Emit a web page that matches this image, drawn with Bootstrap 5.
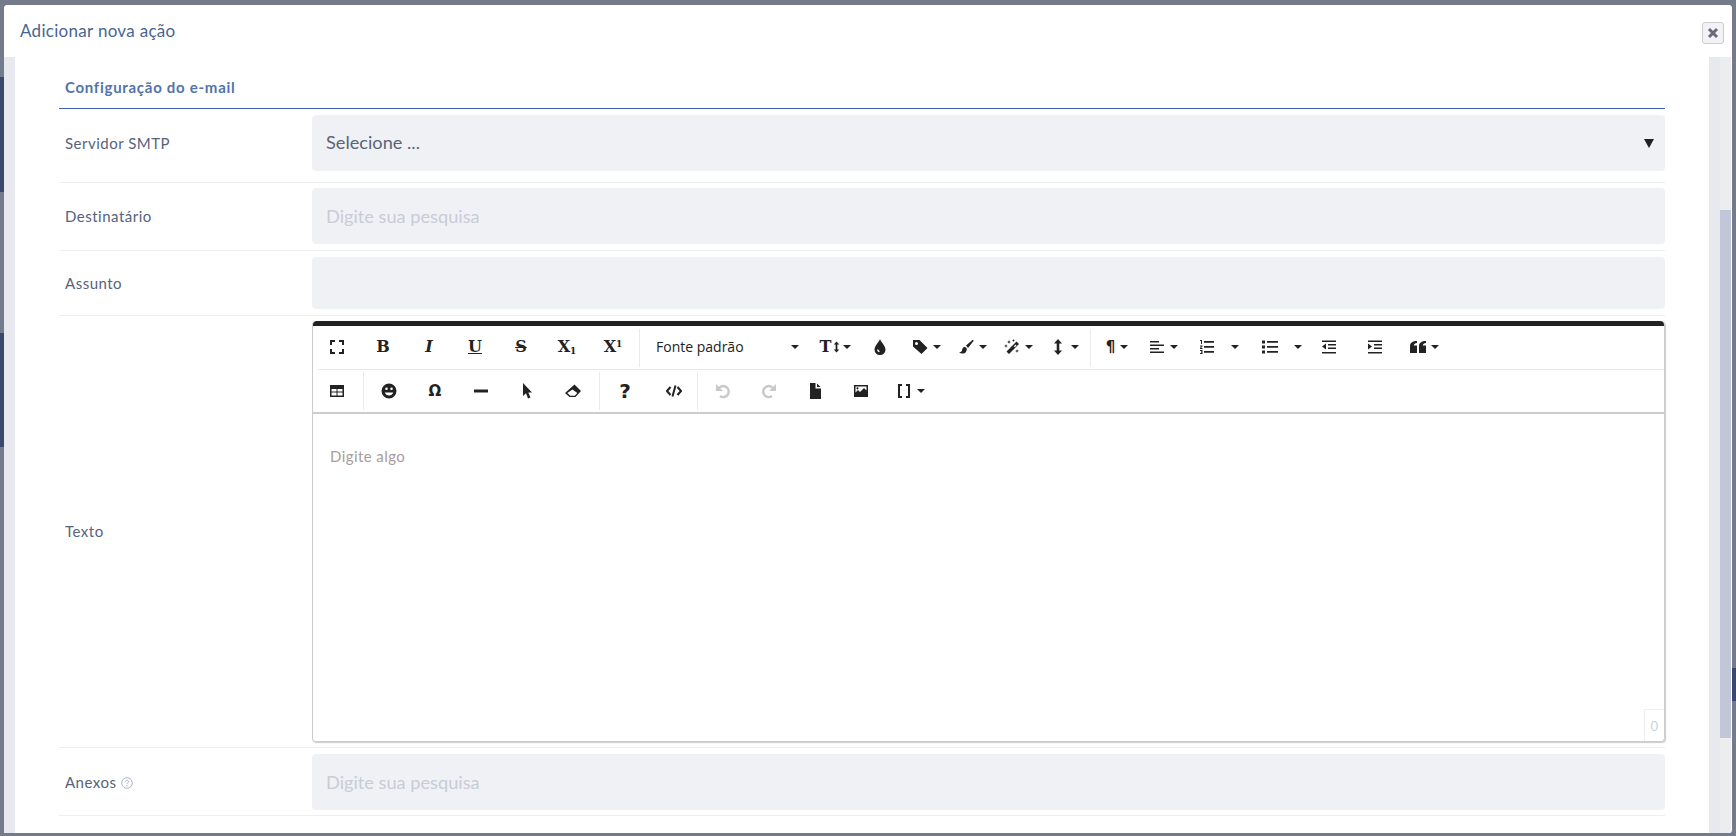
<!DOCTYPE html>
<html lang="pt-BR">
<head>
<meta charset="utf-8">
<title>Adicionar nova ação</title>
<link rel="stylesheet" href="https://cdn.jsdelivr.net/npm/bootstrap@5.3.0/dist/css/bootstrap.min.css">
<style>
html, body { height: 836px; overflow: hidden; }
body { background: #767b8b; padding: 5px 4px 3px; font-family: Lato, "Liberation Sans", sans-serif; }
.fundo-azul { position: absolute; width: 4px; background: #3a4870; }
.janela { height: 828px; background: #fff; border-radius: 3px; }
.janela-topo { height: 52px; padding: 0 8px 0 16px; }
.janela-titulo { font-size: 17px; letter-spacing: .3px; color: #4a6491; margin: 0; font-weight: 400; line-height: 52px; }
.btn-fechar { width: 22px; height: 22px; padding: 0; margin-top: 17px; border: 1px solid #ccc; border-radius: 3px; background: #f3f3f6; }
.calha { width: 11px; background: #e8e9ee; }
.trilho { width: 11px; background: #ecedef; padding-top: 153px; margin-right: 1px; }
.cursor-barra { height: 528px; background: #c0c7d8; }
.conteudo { padding: 0 44px; min-width: 0; }
.secao-titulo { height: 52px; line-height: 60px; padding-left: 6px; margin: 0; font-size: 15px; font-weight: 700; letter-spacing: .72px; color: #5273ab; border-bottom: 1px solid #3f5ea8; }
.linha-campo { padding: 6px 0 5px; border-bottom: 1px solid #eceef0; }
.linha-um { padding-bottom: 11px; }
.linha-dois { padding: 5px 0 6px; }
.linha-tres { padding: 6px 0; }
.linha-quatro { padding: 5px 0; }
.rotulo-campo { width: 253px; padding-left: 6px; margin: 0; font-size: 15px; letter-spacing: .5px; color: #55637c; flex: none; }
.campo-cinza, .campo-cinza:focus { height: 56px; background-color: #f0f1f5; border: 0; border-radius: 4px; padding: 0 14px; font-size: 18.2px; font-weight: 400; color: #5a6478; box-shadow: none; }
.campo-baixo, .campo-baixo:focus { height: 52px; }
.campo-cinza::placeholder { color: #c8ccd8; opacity: 1; }
select.campo-cinza { background-image: url("data:image/svg+xml,%3csvg xmlns='http://www.w3.org/2000/svg' viewBox='0 0 10 10'%3e%3cpath fill='%23222' d='M0 1h10L5 10z'/%3e%3c/svg%3e"); background-size: 10px 10px; background-position: right 11px center; }
.editor { height: 421px; border: 1px solid #ccc; border-top: 0; border-radius: 4px; box-shadow: 1px 1px 1px #ccc; }
.editor-topo { height: 93px; border-top: 5px solid #222; border-radius: 4px 4px 0 0; border-bottom: 2px solid #ccc; padding-left: 1px; }
.ferr-linha { height: 42px; }
.de-cima { border-bottom: 1px solid #eaeaea; height: 44px; margin-left: 4px; }
.de-cima > :first-child { margin-left: -4px; }
.divisor { width: 1px; height: 38px; background: #eaeaea; margin: 3px 3px 0; flex: none; }
.de-baixo .divisor { margin: 2px 2px 0 3px; }
.ferr { width: 46px; height: 42px; padding: 0; border: 0; border-radius: 0; color: #222; display: inline-flex; align-items: center; justify-content: center; flex: none; font-size: 14px; line-height: 1; }
.ferr svg { fill: currentColor; width: 16px; height: 16px; flex: none; }
.ferr.dropdown-toggle::after { border-top-width: 4px; border-left-width: 4px; border-right-width: 4px; margin-left: 5px; vertical-align: 0; }
.ferr-numeros { width: 62px; margin-left: 2px; }
.ferr-lista { width: 58px; margin: 0 -5px 0 3px; }
.ferr-numeros.dropdown-toggle::after, .ferr-lista.dropdown-toggle::after { margin-left: 16px; }
.ferr-aspas { width: 52px; }
.ferr-aspas.dropdown-toggle::after { margin-left: 5px; }
.ferr-tam { padding-left: 3px; }
.ferr-tam.dropdown-toggle::after { margin-left: 1px; }
.ferr-codigo { margin: 0 -3px 0 3px; }
.ferr-colchete { margin-left: 3px; }
.ferr.apagado { color: #c9c9c9; }
.ferr.ferr-fonte { width: 168px; justify-content: space-between; padding: 0 12px 0 13px; font-family: "Open Sans", sans-serif; font-size: 14px; }
.letra-serif { font-family: "DejaVu Serif", serif; font-weight: 700; }
.ferr.letra-serif { font-size: 16px; }
.letra-sans { font-family: "DejaVu Sans", sans-serif; font-weight: 700; }
.ferr.letra-sans { font-size: 15px; }
.ferr.letra-maior { font-size: 20px; }
.ferr-risco { text-decoration: line-through; text-decoration-thickness: 1px; }
.letra-serif sub, .letra-serif sup { font-size: 9px; position: static; }
.letra-serif sub { margin-top: 7px; }
.letra-serif sup { margin-bottom: 7px; }
.ferr svg.seta-tam { width: 11px; }
.editor-texto { padding: 32px 16px 0 17px; color: #a89d9b; font-size: 15px; letter-spacing: .42px; line-height: 21px; position: relative; }
.contador { position: absolute; right: 0; bottom: 0; width: 20px; height: 32px; border: 1px solid #eee; border-right: 0; border-bottom: 0; color: #c9d3e0; font-size: 13px; text-align: center; line-height: 32px; }
.ajuda { width: 12px; height: 12px; margin-left: 5px; vertical-align: -1px; }
</style>
</head>
<body>
<svg width="0" height="0" class="position-absolute">
  <symbol id="i-tela" viewBox="0 0 16 16"><path fill="none" stroke="currentColor" stroke-width="2" d="M2 6V2h4M10 2h4v4M14 10v4h-4M6 14H2v-4"/></symbol>
  <symbol id="i-gota" viewBox="0 0 16 16"><path d="M8 0C7 3 2.500 7 2.500 10.500a5.500 5.500 0 0 0 11 0C13.500 7 9 3 8 0zM5 10.500c0 1.700 1.300 2.500 2.500 2.700v-1.400c-.6-.1-1.100-.6-1.100-1.300z" fill-rule="evenodd"/></symbol>
  <symbol id="i-etiqueta" viewBox="0 0 16 16"><path fill-rule="evenodd" d="M1 1h6.500L15.500 9l-6 6L1 7.500zM4.500 3a1.500 1.500 0 1 0 0 3 1.500 1.500 0 0 0 0-3z"/></symbol>
  <symbol id="i-pincel" viewBox="0 0 16 16"><path d="M14.500 1 8 6.500 10 9l5.500-7c.3-.6-.4-1.400-1-1zM6.700 8C4.500 8 4.300 10 4 11.500c-.2 1-1.500 1.600-3 2 2.500 2 7.500 1.500 7.800-3 .1-1.300-1-2.500-2.100-2.500z"/></symbol>
  <symbol id="i-varinha" viewBox="0 0 16 16"><path d="M12.500 2.500 15 5 5 15l-2.500-2.500zM11.500 5.500 9.800 7.200l1 1 1.700-1.700zM5 1l.6 1.400L7 3l-1.400.6L5 5l-.6-1.400L3 3l1.400-.6zM9.500 0l.4 1.100 1.100.4-1.100.4-.4 1.100-.4-1.100L8 1.500l1.100-.4zM2 5l.5 1.500L4 7l-1.500.5L2 9l-.5-1.500L0 7l1.500-.5zM13 10l.5 1.500L15 12l-1.500.5L13 14l-.5-1.500L11 12l1.500-.5z"/></symbol>
  <symbol id="i-altura" viewBox="0 0 16 16"><path d="M8 0l4 4.500H9.300v7H12L8 16l-4-4.500h2.700v-7H4z"/></symbol>
  <symbol id="i-alinha" viewBox="0 0 16 16"><path d="M1 2h9v1.500H1zM1 5.500h14V7H1zM1 9h9v1.500H1zM1 12.500h14V14H1z"/></symbol>
  <symbol id="i-numeros" viewBox="0 0 16 16"><path d="M5 2h10v1.800H5zM5 7h10v1.800H5zM5 12h10v1.800H5zM1 1h2v4H2V2H1zM1 6.500h2.500v1L2 9h1.500v1H1V9l1.500-1.500H1zM1 11h2.500v4H1v-1h1.500v-.5H2v-1h.5V12H1z"/></symbol>
  <symbol id="i-lista" viewBox="0 0 16 16"><path d="M5 2h11v1.800H5zM5 7h11v1.800H5zM5 12h11v1.800H5zM0 1.500h3v3H0zM0 6.500h3v3H0zM0 11.500h3v3H0z"/></symbol>
  <symbol id="i-recuo" viewBox="0 0 16 16"><path d="M1 1.500h14V3H1zM7 5h8v1.500H7zM7 8.500h8V10H7zM1 13h14v1.500H1zM5 4.500v6L1 7.500z"/></symbol>
  <symbol id="i-avanco" viewBox="0 0 16 16"><path d="M1 1.500h14V3H1zM7 5h8v1.500H7zM7 8.500h8V10H7zM1 13h14v1.500H1zM1 4.500v6l4-3z"/></symbol>
  <symbol id="i-aspas" viewBox="0 0 16 16"><path d="M7 2v2C5 4 4 5 3.800 6.500H7V14H0V7c0-3 2.500-5 7-5zM16 2v2c-2 0-3 1-3.200 2.500H16V14H9V7c0-3 2.500-5 7-5z"/></symbol>
  <symbol id="i-tabela" viewBox="0 0 16 16"><path fill-rule="evenodd" d="M1 2h14v12H1zM2.500 6v2.500h5V6zM8.500 6v2.500h5V6zM2.500 9.500v3h5v-3zM8.500 9.500v3h5v-3z"/></symbol>
  <symbol id="i-sorriso" viewBox="0 0 16 16"><path fill-rule="evenodd" d="M8 .5a7.500 7.500 0 1 0 0 15 7.500 7.500 0 0 0 0-15zM5.500 4.500a1.300 1.300 0 1 1 0 2.600 1.300 1.300 0 0 1 0-2.600zM10.500 4.500a1.300 1.300 0 1 1 0 2.600 1.300 1.300 0 0 1 0-2.600zM3.800 9.500h8.400C11.500 11.500 10 12.500 8 12.500S4.500 11.500 3.800 9.500z"/></symbol>
  <symbol id="i-traco" viewBox="0 0 16 16"><path d="M1 6.500h14v3H1z"/></symbol>
  <symbol id="i-seta" viewBox="0 0 16 16"><path d="M4 0v13l3-2.800L9 15.500l2.500-1-2.200-5H13z"/></symbol>
  <symbol id="i-borracha" viewBox="0 0 16 16"><path fill-rule="evenodd" d="M9.500 1.500 16 8l-5.500 6H4.500L0 10zM7.500 6.500 2.300 10l3 2.800h4.500l2.500-2.800z"/></symbol>
  <symbol id="i-codigo" viewBox="0 0 16 16"><path fill="none" stroke="currentColor" stroke-width="2" d="M4.500 4 1 8l3.500 4M11.500 4 15 8l-3.500 4M9.500 2.500l-3 11"/></symbol>
  <symbol id="i-desfaz" viewBox="0 0 16 16"><path fill="none" stroke="currentColor" stroke-width="2.400" d="M3 7a5.500 5.500 0 1 1 2 6"/><path d="M1 1V8h7z"/></symbol>
  <symbol id="i-refaz" viewBox="0 0 16 16"><path fill="none" stroke="currentColor" stroke-width="2.400" d="M13 7a5.500 5.500 0 1 0-2 6"/><path d="M15 1V8H8z"/></symbol>
  <symbol id="i-arquivo" viewBox="0 0 16 16"><path d="M3 0h5.500v5.500H14V16H3zM10 .5 13.500 4H10z"/></symbol>
  <symbol id="i-imagem" viewBox="0 0 16 16"><path fill-rule="evenodd" d="M1 2h14v12H1zM2.500 3.500v6L5 7l2 2 4-4 2.500 2.500v-4z"/><circle cx="4.500" cy="5.300" r="1.100"/></symbol>
  <symbol id="i-colchete" viewBox="0 0 16 16"><path fill="none" stroke="currentColor" stroke-width="2" d="M6 2H3v12h3M10 2h3v12h-3"/></symbol>
</svg>

<div class="fundo-azul top-0 start-0" style="margin-top:77px;height:115px"></div>
<div class="fundo-azul top-0 start-0" style="margin-top:333px;height:114px"></div>
<div class="fundo-azul top-0 end-0" style="margin-top:668px;height:33px"></div>

<div class="janela d-flex flex-column position-relative">
  <div class="janela-topo d-flex justify-content-between">
    <h5 class="janela-titulo">Adicionar nova ação</h5>
    <button type="button" class="btn btn-fechar d-flex align-items-center justify-content-center">
      <svg width="12" height="12" viewBox="0 0 12 12"><path fill="none" stroke="#6a6a7a" stroke-width="3" d="M2 2l8 8M10 2l-8 8"/></svg>
    </button>
  </div>
  <div class="d-flex flex-grow-1">
    <div class="calha"></div>
    <div class="conteudo flex-grow-1">
      <p class="secao-titulo">Configuração do e-mail</p>

      <div class="linha-campo linha-um d-flex align-items-center">
        <label class="rotulo-campo">Servidor SMTP</label>
        <select class="form-select campo-cinza"><option>Selecione ...</option></select>
      </div>
      <div class="linha-campo linha-dois d-flex align-items-center">
        <label class="rotulo-campo">Destinatário</label>
        <input type="text" class="form-control campo-cinza" placeholder="Digite sua pesquisa">
      </div>
      <div class="linha-campo linha-tres d-flex align-items-center">
        <label class="rotulo-campo">Assunto</label>
        <input type="text" class="form-control campo-cinza campo-baixo">
      </div>
      <div class="linha-campo linha-quatro d-flex align-items-center">
        <label class="rotulo-campo">Texto</label>
        <div class="editor flex-grow-1 d-flex flex-column">
          <div class="editor-topo">
            <div class="ferr-linha de-cima d-flex">
              <button class="btn ferr"><svg><use href="#i-tela"/></svg></button>
              <button class="btn ferr letra-serif">B</button>
              <button class="btn ferr letra-serif fst-italic">I</button>
              <button class="btn ferr letra-serif text-decoration-underline">U</button>
              <button class="btn ferr letra-serif ferr-risco">S</button>
              <button class="btn ferr letra-serif">X<sub>1</sub></button>
              <button class="btn ferr letra-serif">X<sup>1</sup></button>
              <span class="divisor"></span>
              <button class="btn ferr ferr-fonte dropdown-toggle">Fonte padrão</button>
              <button class="btn ferr ferr-tam letra-serif dropdown-toggle">T<svg class="seta-tam"><use href="#i-altura"/></svg></button>
              <button class="btn ferr"><svg><use href="#i-gota"/></svg></button>
              <button class="btn ferr dropdown-toggle"><svg><use href="#i-etiqueta"/></svg></button>
              <button class="btn ferr dropdown-toggle"><svg><use href="#i-pincel"/></svg></button>
              <button class="btn ferr dropdown-toggle"><svg><use href="#i-varinha"/></svg></button>
              <button class="btn ferr dropdown-toggle"><svg><use href="#i-altura"/></svg></button>
              <span class="divisor"></span>
              <button class="btn ferr letra-sans dropdown-toggle">¶</button>
              <button class="btn ferr dropdown-toggle"><svg><use href="#i-alinha"/></svg></button>
              <button class="btn ferr ferr-numeros dropdown-toggle"><svg><use href="#i-numeros"/></svg></button>
              <button class="btn ferr ferr-lista dropdown-toggle"><svg><use href="#i-lista"/></svg></button>
              <button class="btn ferr"><svg><use href="#i-recuo"/></svg></button>
              <button class="btn ferr"><svg><use href="#i-avanco"/></svg></button>
              <button class="btn ferr ferr-aspas dropdown-toggle"><svg><use href="#i-aspas"/></svg></button>
            </div>
            <div class="ferr-linha de-baixo d-flex">
              <button class="btn ferr"><svg><use href="#i-tabela"/></svg></button>
              <span class="divisor"></span>
              <button class="btn ferr"><svg><use href="#i-sorriso"/></svg></button>
              <button class="btn ferr letra-sans">Ω</button>
              <button class="btn ferr"><svg><use href="#i-traco"/></svg></button>
              <button class="btn ferr"><svg><use href="#i-seta"/></svg></button>
              <button class="btn ferr"><svg><use href="#i-borracha"/></svg></button>
              <span class="divisor"></span>
              <button class="btn ferr letra-sans letra-maior">?</button>
              <button class="btn ferr ferr-codigo"><svg><use href="#i-codigo"/></svg></button>
              <span class="divisor"></span>
              <button class="btn ferr apagado"><svg><use href="#i-desfaz"/></svg></button>
              <button class="btn ferr apagado"><svg><use href="#i-refaz"/></svg></button>
              <button class="btn ferr"><svg><use href="#i-arquivo"/></svg></button>
              <button class="btn ferr"><svg><use href="#i-imagem"/></svg></button>
              <button class="btn ferr ferr-colchete dropdown-toggle"><svg><use href="#i-colchete"/></svg></button>
            </div>
          </div>
          <div class="editor-texto flex-grow-1">
            Digite algo
            <div class="contador">0</div>
          </div>
        </div>
      </div>
      <div class="linha-campo d-flex align-items-center">
        <label class="rotulo-campo">Anexos<svg class="ajuda" viewBox="0 0 12 12"><circle cx="6" cy="6" r="5.300" fill="none" stroke="#aab4c8" stroke-width="1"/><path fill="none" stroke="#aab4c8" stroke-width="1" d="M4.300 4.800C4.300 3.800 5 3.300 6 3.300s1.700.6 1.700 1.400C7.700 5.900 6 5.800 6 7.200"/><circle cx="6" cy="8.800" r=".7" fill="#aab4c8"/></svg></label>
        <input type="text" class="form-control campo-cinza" placeholder="Digite sua pesquisa">
      </div>
    </div>
    <div class="calha"></div>
    <div class="trilho"><div class="cursor-barra"></div></div>
  </div>
</div>
<script src="https://cdn.jsdelivr.net/npm/bootstrap@5.3.0/dist/js/bootstrap.bundle.min.js"></script>
</body>
</html>
